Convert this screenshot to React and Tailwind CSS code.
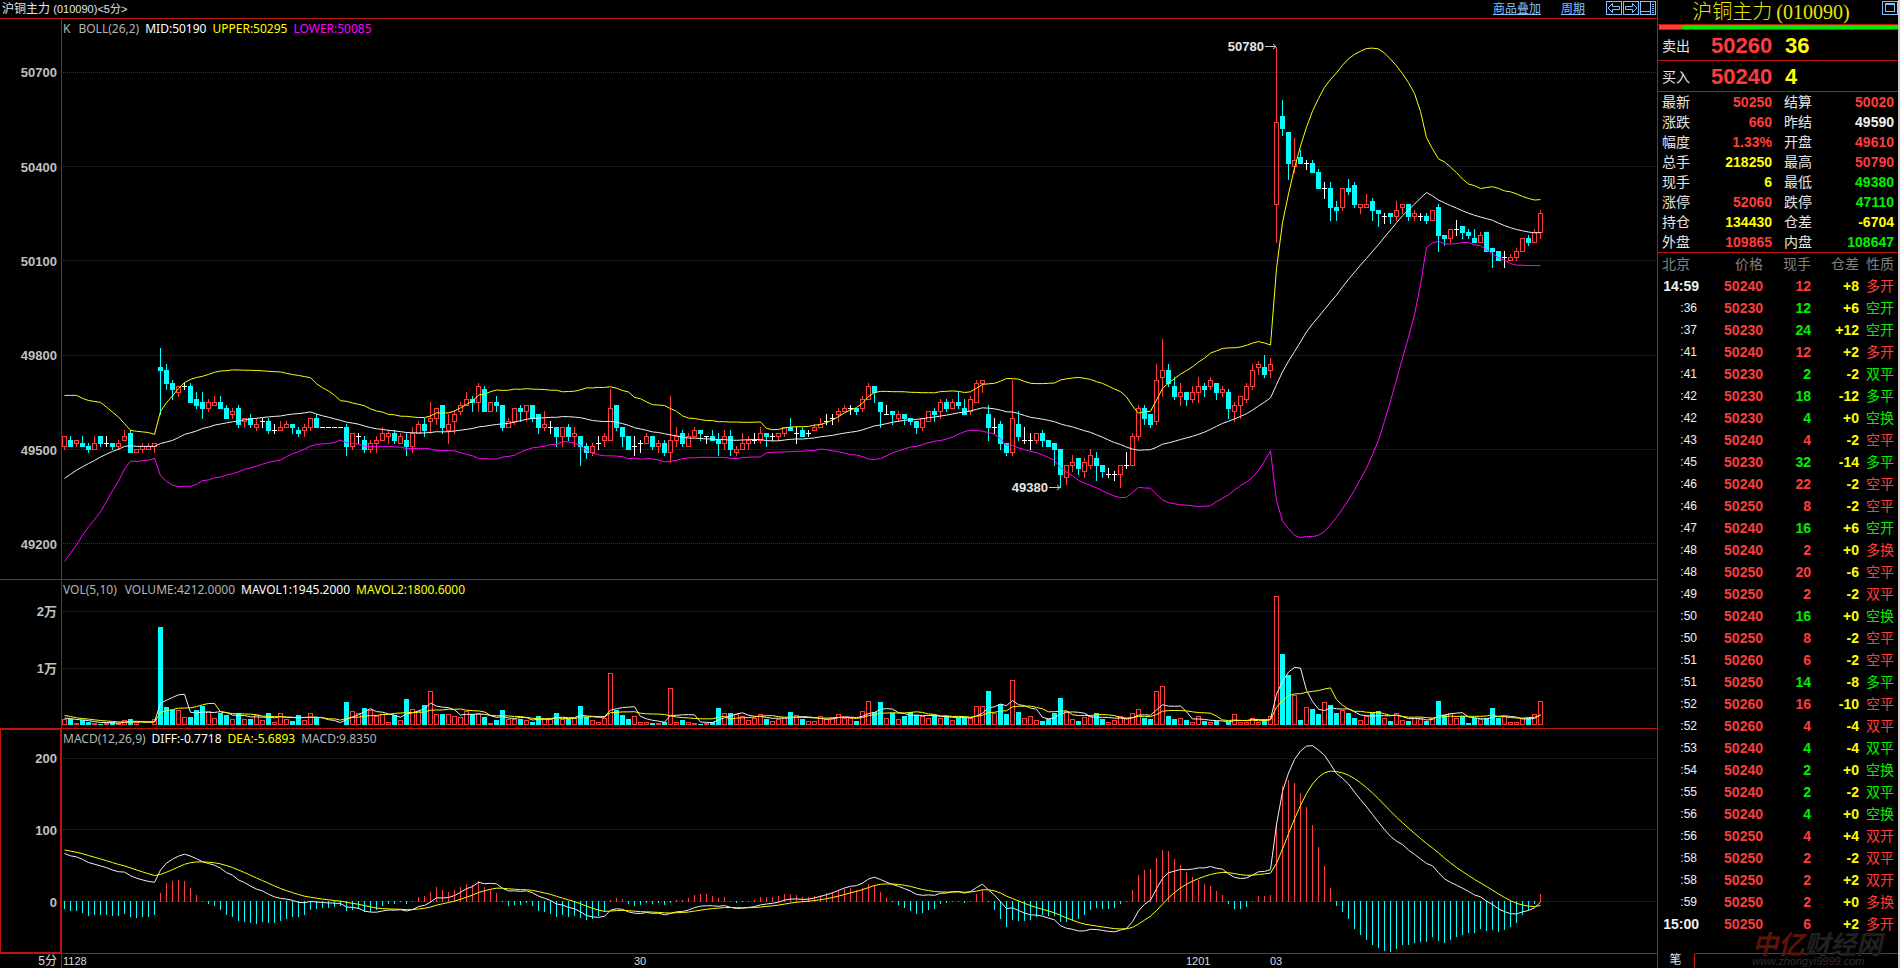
import clsx from "clsx";

// [open, close, high, low], in ticks of 10 counted from 49500
const CANDLES = [
  [1, 4, 4, 0], [3, 1, 4, 1], [2, 3, 3, 1], [2, 1, 4, 1], [1, 0, 2, -1], [0, 2, 4, 0], [4, 2, 4, 1], [2, 2, 4, 1],
  [2, 1, 2, 0], [1, 2, 3, 0], [3, 4, 6, 3], [5, -1, 6, -1], [-1, 0, 0, -1], [0, 1, 2, -1], [0, 1, 2, 0], [1, 2, 2, -1],
  [26, 25, 32, 11], [25, 21, 27, 19], [21, 19, 22, 16], [18, 20, 20, 17], [20, 20, 21, 19], [20, 15, 21, 15], [16, 14, 18, 13], [15, 13, 18, 10],
  [13, 15, 16, 12], [14, 15, 17, 14], [15, 13, 17, 13], [13, 10, 14, 10], [11, 12, 13, 10], [13, 8, 14, 7], [9, 10, 10, 7], [10, 8, 11, 7],
  [7, 8, 10, 6], [9, 9, 10, 7], [9, 6, 10, 5], [6, 6, 8, 5], [6, 7, 9, 6], [7, 8, 9, 7], [8, 7, 8, 5], [6, 5, 7, 4],
  [6, 7, 8, 4], [7, 10, 10, 6], [10, 7, 11, 7], [7, 7, 7, 7], [7, 7, 7, 7], [7, 7, 7, 7], [7, 7, 7, 7], [7, 1, 8, -2],
  [1, 5, 5, 0], [4, 4, 5, 2], [3, 0, 4, -1], [0, 2, 3, -1], [2, 3, 4, -1], [3, 5, 7, 3], [4, 5, 6, 2], [5, 3, 6, 2],
  [2, 4, 5, 2], [3, 1, 5, -2], [1, 5, 7, -1], [5, 8, 9, 5], [8, 6, 10, 4], [9, 10, 15, 5], [10, 13, 13, 8], [14, 7, 14, 5],
  [6, 8, 11, 2], [9, 11, 12, 5], [12, 14, 15, 11], [14, 16, 18, 14], [16, 15, 17, 12], [15, 20, 21, 12], [19, 12, 20, 12], [12, 15, 15, 12],
  [15, 14, 17, 12], [14, 7, 14, 6], [7, 9, 10, 7], [9, 13, 13, 8], [13, 12, 14, 9], [12, 14, 14, 9], [14, 10, 14, 9], [11, 7, 11, 5],
  [7, 8, 12, 6], [7, 7, 9, 5], [7, 4, 7, 1], [4, 7, 7, 1], [7, 4, 8, 3], [4, 5, 7, 1], [4, 1, 4, -5], [1, -1, 2, -3],
  [-1, 1, 2, -2], [2, 2, 4, 0], [3, 4, 5, 1], [3, 13, 19, 3], [14, 7, 14, 6], [7, 4, 7, 1], [4, 0, 4, 0], [1, 1, 4, -2],
  [2, 2, 3, -1], [2, 4, 5, 2], [4, 1, 4, 0], [1, 2, 3, -1], [2, -1, 3, -2], [-1, 3, 17, -4], [3, 4, 7, 1], [5, 2, 6, 1],
  [1, 4, 5, 1], [4, 6, 7, 4], [6, 5, 6, 3], [4, 4, 4, 2], [4, 3, 6, 3], [3, 2, 5, -2], [2, 4, 6, 0], [4, 0, 6, -2],
  [-1, 0, 1, -2], [0, 2, 5, 0], [2, 3, 4, 0], [3, 3, 5, 2], [3, 5, 7, 2], [5, 4, 5, 1], [4, 4, 5, 3], [4, 5, 5, 3],
  [5, 7, 7, 4], [7, 6, 10, 6], [5, 5, 7, 2], [6, 4, 7, 4], [5, 5, 6, 4], [6, 7, 8, 6], [7, 8, 10, 7], [9, 9, 11, 8],
  [10, 10, 11, 8], [11, 12, 13, 9], [12, 13, 14, 12], [13, 13, 14, 11], [13, 12, 13, 11], [13, 16, 17, 12], [16, 20, 21, 16], [20, 18, 20, 15],
  [15, 12, 15, 7], [11, 11, 14, 11], [12, 11, 12, 8], [10, 11, 12, 9], [11, 10, 11, 8], [10, 9, 10, 8], [9, 7, 9, 5], [7, 10, 10, 6],
  [9, 12, 12, 9], [12, 11, 13, 9], [12, 15, 16, 10], [15, 13, 16, 12], [13, 15, 16, 13], [15, 14, 18, 13], [13, 11, 16, 11], [12, 16, 17, 11],
  [15, 21, 22, 15], [21, 22, 22, 18], [11, 7, 14, 3], [7, 7, 10, 5], [8, 2, 9, 0], [2, -1, 2, -2], [-1, 10, 22, -2], [8, 4, 12, 3],
  [3, 3, 7, 2], [3, 3, 5, 0], [3, 5, 5, 2], [5, 3, 6, 1], [3, 1, 3, 1], [2, 0, 2, -5], [0, -8, 0, -12], [-9, -5, -5, -11],
  [-5, -4, -2, -7], [-3, -6, -3, -8], [-7, -4, -3, -9], [-5, -2, 0, -6], [-3, -5, -1, -10], [-5, -7, -5, -9], [-8, -8, -6, -9], [-8, -8, -7, -10],
  [-8, -5, -5, -12], [-5, -5, -1, -6], [-5, 4, 5, -5], [4, 13, 14, 3], [13, 10, 14, 8], [11, 8, 11, 7], [9, 22, 27, 8], [23, 25, 35, 17],
  [25, 21, 27, 20], [20, 17, 23, 16], [17, 18, 21, 14], [18, 16, 18, 14], [16, 18, 20, 15], [18, 20, 23, 15], [20, 19, 21, 17], [20, 22, 23, 19],
  [21, 18, 21, 16], [18, 19, 20, 17], [18, 13, 19, 10], [12, 14, 15, 9], [14, 17, 17, 10], [16, 20, 21, 15], [20, 25, 27, 19], [26, 27, 28, 24],
  [26, 24, 30, 23], [25, 27, 29, 23], [78, 104, 128, 66], [106, 102, 111, 100], [101, 91, 101, 86], [90, 92, 99, 88], [93, 91, 95, 91], [91, 91, 92, 89],
  [91, 88, 92, 88], [88, 83, 89, 83], [83, 83, 85, 80], [83, 77, 85, 73], [77, 76, 79, 73], [77, 83, 83, 76], [83, 82, 86, 81], [84, 78, 85, 77],
  [77, 78, 78, 75], [77, 78, 81, 77], [79, 76, 80, 73], [76, 75, 76, 71], [74, 74, 75, 72], [75, 74, 75, 72], [74, 76, 79, 73], [77, 78, 78, 75],
  [78, 74, 78, 73], [74, 75, 76, 73], [74, 74, 75, 73], [74, 73, 75, 72], [73, 76, 76, 73], [77, 68, 78, 63], [68, 67, 68, 65], [67, 70, 70, 66],
  [70, 70, 73, 68], [71, 69, 71, 67], [69, 68, 70, 67], [67, 66, 70, 66], [66, 68, 69, 66], [69, 63, 69, 63], [64, 63, 64, 58], [63, 60, 63, 60],
  [61, 61, 63, 58], [60, 61, 62, 60], [61, 63, 64, 60], [63, 67, 67, 63], [67, 66, 68, 65], [66, 69, 70, 66], [69, 75, 76, 67],
];

// volume per bar, in hundreds
const VOLUMES = [
  11, 11, 3, 8, 6, 3, 2, 3, 5, 3, 9, 11, 5, 2, 2, 10, 172, 32, 26, 26, 14, 14, 26, 34, 24, 12, 22, 18, 11, 21,
  11, 11, 17, 9, 21, 5, 22, 11, 7, 18, 9, 21, 13, 2, 2, 2, 2, 41, 24, 21, 30, 27, 16, 19, 6, 18, 9, 46, 28, 24,
  35, 60, 19, 19, 20, 16, 14, 25, 19, 22, 14, 3, 9, 26, 10, 10, 11, 8, 5, 16, 11, 11, 21, 10, 10, 12, 33, 14, 8, 6,
  12, 91, 26, 18, 11, 15, 6, 5, 4, 4, 5, 66, 6, 9, 5, 4, 2, 4, 5, 30, 22, 21, 19, 15, 9, 13, 19, 11, 7, 10,
  13, 23, 17, 11, 7, 7, 15, 11, 13, 19, 13, 13, 7, 25, 42, 23, 41, 13, 21, 11, 16, 23, 17, 15, 13, 17, 13, 16, 9, 12,
  14, 12, 33, 33, 60, 21, 37, 19, 79, 23, 13, 15, 9, 7, 10, 22, 48, 24, 11, 7, 14, 15, 21, 11, 5, 9, 15, 13, 21, 29,
  12, 11, 59, 68, 16, 11, 13, 9, 5, 15, 7, 5, 7, 2, 6, 19, 6, 6, 12, 6, 11, 15, 227, 125, 88, 52, 9, 31, 28, 19,
  40, 35, 21, 26, 21, 12, 8, 16, 21, 25, 12, 7, 22, 8, 7, 12, 10, 7, 12, 42, 17, 21, 13, 15, 4, 12, 11, 12, 30, 12,
  16, 6, 6, 13, 13, 19, 42,
];

// bars before the visible window
const PREV_VOLUMES = [30, 25, 20, 18, 15, 14, 12, 11, 12];
const SEED_MID = [-9.2, -7.9, -6.6, -5.5, -4.5, -3.5, -2.4, -1.5, -0.6, 0.1, 1, 1.2, 1, 1, 1, 1, 1.9, 2.4, 2.9, 3.8, 4.8, 5.3, 5.9, 6.7, 7.1];
const SEED_UPPER = [17.2, 17.2, 17.2, 16.3, 15.6, 15.3, 15, 13.5, 11.9, 10.3, 8.2, 6.1, 5.8, 5.6, 5.4, 4.8, 12.1, 14.9, 17.1, 19.4, 21.3, 22.3, 22.9, 23.3, 23.9];

const RED = "#ff3c3c";
const CYAN = "#00ffff";
const WHITE = "#f0f0f0";
const YELLOW = "#ffff00";
const MAGENTA = "#ff00ff";

const closes = CANDLES.map((c) => c[1]);
const barX = (i) => 2 + i * 6;

function boll(period) {
  return closes.map((_, i) => {
    if (i < period - 1) {
      return { mid: SEED_MID[i], upper: SEED_UPPER[i], lower: 2 * SEED_MID[i] - SEED_UPPER[i] };
    }
    const part = closes.slice(i - period + 1, i + 1);
    const mid = part.reduce((a, b) => a + b, 0) / period;
    const std = Math.sqrt(part.reduce((a, b) => a + (b - mid) ** 2, 0) / (period - 1));
    return { mid, upper: mid + 2 * std, lower: mid - 2 * std };
  });
}

function volumeAverage(period) {
  const all = [...PREV_VOLUMES, ...VOLUMES];
  return VOLUMES.map((_, i) => {
    const end = i + PREV_VOLUMES.length + 1;
    return all.slice(end - period, end).reduce((a, b) => a + b, 0) / period;
  });
}

function macd() {
  let fast = -13;
  let slow = -80;
  let dea = 72;
  return closes.map((c, i) => {
    if (i > 0) {
      fast += (c * 10 - fast) * (2 / 13);
      slow += (c * 10 - slow) * (2 / 27);
      dea += (fast - slow - dea) * (2 / 10);
    }
    return { diff: fast - slow, dea, bar: 2 * (fast - slow - dea) };
  });
}

const priceY = (t) => 410.5 - t * 3.143;
const volY = (v) => 125 - v * 0.568;
const macdY = (v) => 152.5 - v * 0.716;

const BOLL = boll(26);
const MACD = macd();

function Curve({ values, toY, color }) {
  const points = values.map((v, i) => `${barX(i) + 0.5},${toY(v).toFixed(1)}`).join(" ");
  return <polyline points={points} fill="none" stroke={color} strokeWidth="1" />;
}

function GridLines({ ys }) {
  return ys.map((y) => (
    <line key={y} x1="1" x2="100%" y1={Math.floor(y) + 0.5} y2={Math.floor(y) + 0.5} stroke="#a80000" strokeDasharray="1 1" shapeRendering="crispEdges" />
  ));
}

function Candle({ i, candle }) {
  const [open, close, high, low] = candle;
  const x = barX(i);
  const top = Math.round(priceY(Math.max(open, close)) - 0.5);
  const bottom = Math.round(priceY(Math.min(open, close)) - 0.5);
  const hi = Math.round(priceY(high) - 0.5);
  const lo = Math.round(priceY(low) - 0.5);
  if (open === close) {
    return <path d={`M${x - 2} ${top + 0.5}h5M${x + 0.5} ${hi}V${lo + 1}`} stroke="#fff" />;
  }
  if (close > open) {
    return <path d={`M${x - 1.5} ${top + 0.5}h4V${bottom + 0.5}h-4zM${x + 0.5} ${hi}V${top}M${x + 0.5} ${bottom + 1}V${lo + 1}`} stroke={RED} fill="none" />;
  }
  return (
    <g fill={CYAN}>
      <rect x={x - 2} y={top} width="5" height={bottom - top + 1} />
      <rect x={x} y={hi} width="1" height={lo - hi + 1} />
    </g>
  );
}

function PriceMark({ x, y, label }) {
  return (
    <g>
      <text x={x - 12} y={y + 5} textAnchor="end" fill="#e6e6e6" className="text-[13px] font-bold">{label}</text>
      <path d={`M${x - 11} ${y + 0.5}h11M${x - 3} ${y - 2}l3 2.5l-3 2.5`} stroke="#c8c8c8" fill="none" />
    </g>
  );
}

function Panel({ title, labels, height, active, children }) {
  return (
    <section className="flex border-b border-[#c01408]">
      <div className={clsx("w-[62px] shrink-0 border-r border-[#c01408] pt-5", active && "shadow-[inset_0_0_0_1px_#c01408]")}>
        <svg className={clsx("block w-full overflow-visible", height)}>
          {labels.map(([text, y]) => (
            <text key={text} x="57" y={y + 5} textAnchor="end" fill="#c0c0c0" className="text-[13px] font-bold">{text}</text>
          ))}
        </svg>
      </div>
      <div className="min-w-0 flex-1">
        <h2 className="flex h-5 items-center gap-1.5 pl-px font-['Noto_Sans',sans-serif] text-xs whitespace-nowrap">{title}</h2>
        <svg className={clsx("block w-full overflow-visible", height)}>{children}</svg>
      </div>
    </section>
  );
}

function PricePanel() {
  const ticks = [["50700", 120], ["50400", 90], ["50100", 60], ["49800", 30], ["49500", 0], ["49200", -30]];
  return (
    <Panel
      height="h-[540px]"
      labels={ticks.map(([t, v]) => [t, priceY(v)])}
      title={
        <>
          <span className="mr-0.5 text-[#b4b4b4]">K</span>
          <span className="text-[#b4b4b4]">BOLL(26,2)</span>
          <span className="text-white">MID:50190</span>
          <span className="text-[#ffff00]">UPPER:50295</span>
          <span className="text-[#ff00ff]">LOWER:50085</span>
        </>
      }
    >
      <GridLines ys={ticks.map(([, v]) => priceY(v))} />
      <g shapeRendering="crispEdges">
        {CANDLES.map((c, i) => <Candle key={i} i={i} candle={c} />)}
      </g>
      <Curve values={BOLL.map((b) => b.mid)} toY={priceY} color={WHITE} />
      <Curve values={BOLL.map((b) => b.upper)} toY={priceY} color={YELLOW} />
      <Curve values={BOLL.map((b) => b.lower)} toY={priceY} color={MAGENTA} />
      <PriceMark x={barX(202)} y={7} label="50780" />
      <PriceMark x={barX(166)} y={448} label="49380" />
    </Panel>
  );
}

function VolumePanel() {
  return (
    <Panel
      height="h-32"
      labels={[["2万", volY(200)], ["1万", volY(100)]]}
      title={
        <>
          <span className="mr-0.5 text-[#b4b4b4]">VOL(5,10)</span>
          <span className="text-[#b4b4b4]">VOLUME:4212.0000</span>
          <span className="text-white">MAVOL1:1945.2000</span>
          <span className="text-[#ffff00]">MAVOL2:1800.6000</span>
        </>
      }
    >
      <GridLines ys={[volY(200), volY(100)]} />
      <g shapeRendering="crispEdges">
        {VOLUMES.map((v, i) => {
          const up = CANDLES[i][1] >= CANDLES[i][0];
          const top = Math.round(volY(v));
          return up ? (
            <rect key={i} x={barX(i) - 1.5} y={top + 0.5} width="4" height={124 - top} fill="none" stroke={RED} />
          ) : (
            <rect key={i} x={barX(i) - 2} y={top} width="5" height={125 - top} fill={CYAN} />
          );
        })}
      </g>
      <Curve values={volumeAverage(5)} toY={volY} color={WHITE} />
      <Curve values={volumeAverage(10)} toY={volY} color={YELLOW} />
    </Panel>
  );
}

function MacdPanel() {
  return (
    <Panel
      active
      height="h-[204px]"
      labels={[["200", macdY(200)], ["100", macdY(100)], ["0", macdY(0)]]}
      title={
        <>
          <span className="text-[#b4b4b4]">MACD(12,26,9)</span>
          <span className="text-white">DIFF:-0.7718</span>
          <span className="text-[#ffff00]">DEA:-5.6893</span>
          <span className="text-[#b4b4b4]">MACD:9.8350</span>
        </>
      }
    >
      <GridLines ys={[macdY(200), macdY(100), macdY(0)]} />
      <g shapeRendering="crispEdges">
        {MACD.map(({ bar }, i) => {
          const y = Math.round(macdY(bar));
          return bar >= 0 ? (
            <rect key={i} x={barX(i)} y={y} width="1" height={Math.max(153 - y, 1)} fill={RED} />
          ) : (
            <rect key={i} x={barX(i)} y="152" width="1" height={Math.max(y - 152, 1)} fill={CYAN} />
          );
        })}
      </g>
      <Curve values={MACD.map((m) => m.diff)} toY={macdY} color={WHITE} />
      <Curve values={MACD.map((m) => m.dea)} toY={macdY} color={YELLOW} />
    </Panel>
  );
}

function TimeAxis() {
  const labels = [["1128", 1], ["30", 572], ["1201", 1124], ["03", 1208]];
  return (
    <div className="flex h-3.5 text-[11px] leading-[14px] text-[#dcdcdc]">
      <div className="w-[62px] shrink-0 border-r border-[#c01408] pr-1 text-right text-xs leading-[14px]">5分</div>
      <svg className="block h-full min-w-0 flex-1">
        {labels.map(([text, x]) => <text key={text} x={x} y="11" fill="#dcdcdc">{text}</text>)}
      </svg>
    </div>
  );
}

function ToolButton({ label, children }) {
  return (
    <button type="button" aria-label={label} className="block">
      <svg width="16" height="14" viewBox="0 0 16 14" fill="none" stroke="#80c0ff" shapeRendering="crispEdges">
        <rect x="0.5" y="0.5" width="15" height="13" />
        {children}
      </svg>
    </button>
  );
}

function TopBar() {
  return (
    <header className="flex h-[19px] items-start border-b border-[#c01408] pl-0.5 text-xs">
      <h1 className="flex-1 leading-[18px] text-[#e6e6e6]">
        沪铜主力 <span className="text-[11px]">(010090)&lt;5分&gt;</span>
      </h1>
      <nav className="flex gap-5 pr-[21px] leading-[18px] text-[#80c0ff] underline">
        <a href="#overlay">商品叠加</a>
        <a href="#period">周期</a>
      </nav>
      <div className="flex gap-px pt-px pr-px">
        <ToolButton label="左移"><path d="M6.5 2.5L2 7l4.5 4.5v-3h7v-3h-7z" shapeRendering="auto" /></ToolButton>
        <ToolButton label="右移"><path d="M9.5 2.5L14 7l-4.5 4.5v-3h-7v-3h7z" shapeRendering="auto" /></ToolButton>
        <ToolButton label="分栏"><path d="M10.5 1v12M1 10.5h9M12 3.5h2M12 5.5h2M12 7.5h2M12 9.5h2M12 11.5h2" /></ToolButton>
      </div>
    </header>
  );
}

const TONES = {
  r: "text-[#ff3c3c]",
  g: "text-[#00f000]",
  y: "text-[#ffff00]",
  w: "text-[#f0f0f0]",
};

const QUOTES = [
  ["最新", "50250", "r", "结算", "50020", "r"],
  ["涨跌", "660", "r", "昨结", "49590", "w"],
  ["幅度", "1.33%", "r", "开盘", "49610", "r"],
  ["总手", "218250", "y", "最高", "50790", "r"],
  ["现手", "6", "y", "最低", "49380", "g"],
  ["涨停", "52060", "r", "跌停", "47110", "g"],
  ["持仓", "134430", "y", "仓差", "-6704", "y"],
  ["外盘", "109865", "r", "内盘", "108647", "g"],
];

const TICKS = [
  ["14:59", 50240, 12, "+8", "多开", "r"],
  [":36", 50230, 12, "+6", "空开", "g"],
  [":37", 50230, 24, "+12", "空开", "g"],
  [":41", 50240, 12, "+2", "多开", "r"],
  [":41", 50230, 2, "-2", "双平", "g"],
  [":42", 50230, 18, "-12", "多平", "g"],
  [":42", 50230, 4, "+0", "空换", "g"],
  [":43", 50240, 4, "-2", "空平", "r"],
  [":45", 50230, 32, "-14", "多平", "g"],
  [":46", 50240, 22, "-2", "空平", "r"],
  [":46", 50250, 8, "-2", "空平", "r"],
  [":47", 50240, 16, "+6", "空开", "g"],
  [":48", 50240, 2, "+0", "多换", "r"],
  [":48", 50250, 20, "-6", "空平", "r"],
  [":49", 50250, 2, "-2", "双平", "r"],
  [":50", 50240, 16, "+0", "空换", "g"],
  [":50", 50250, 8, "-2", "空平", "r"],
  [":51", 50260, 6, "-2", "空平", "r"],
  [":51", 50250, 14, "-8", "多平", "g"],
  [":52", 50260, 16, "-10", "空平", "r"],
  [":52", 50260, 4, "-4", "双平", "r"],
  [":53", 50240, 4, "-4", "双平", "g"],
  [":54", 50240, 2, "+0", "空换", "g"],
  [":55", 50240, 2, "-2", "双平", "g"],
  [":56", 50240, 4, "+0", "空换", "g"],
  [":56", 50250, 4, "+4", "双开", "r"],
  [":58", 50250, 2, "-2", "双平", "r"],
  [":58", 50250, 2, "+2", "双开", "r"],
  [":59", 50250, 2, "+0", "多换", "r"],
  ["15:00", 50250, 6, "+2", "多开", "r"],
];

function BidAsk({ label, price, size }) {
  return (
    <div className="flex h-[31px] items-center border-b border-[#c01408] pt-px pl-1 text-sm text-[#e6e6e6]">
      <span className="w-[49px]">{label}</span>
      <span className="w-[74px] text-[22px] leading-7 font-bold text-[#ff3c3c]">{price}</span>
      <span className="text-[22px] leading-7 font-bold text-[#ffff00]">{size}</span>
    </div>
  );
}

function QuotePanel() {
  return (
    <aside className="relative flex w-[243px] shrink-0 flex-col border-r-2 border-l border-r-[#d4c8c8] border-l-[#c01408] bg-black">
      <div className="relative flex h-6 items-center justify-center pr-3.5">
        <h2 className="flex gap-1 font-['Liberation_Serif','Noto_Sans_CJK_SC',serif] text-xl leading-6 font-light text-[#e8e800]">
          <span>沪铜主力</span>
          <span>(010090)</span>
        </h2>
        <button type="button" aria-label="最大化" className="absolute top-px right-0">
          <svg width="16" height="14" viewBox="0 0 16 14" fill="none" stroke="#80c0ff" shapeRendering="crispEdges" className="block">
            <rect x="0.5" y="0.5" width="15" height="13" />
            <rect x="3.5" y="3.5" width="9" height="7" />
            <path d="M3 2.5h10" />
          </svg>
        </button>
      </div>
      <div className="flex h-1.5 border-y border-[#c01408] pl-px">
        <div className="w-[23px] bg-[#ff3c3c]" />
        <div className="flex-1 bg-[#00e600]" />
      </div>
      <BidAsk label="卖出" price="50260" size="36" />
      <BidAsk label="买入" price="50240" size="4" />
      <table className="w-full table-fixed border-b border-[#c01408] text-sm leading-5">
        <colgroup>
          <col className="w-[40px]" />
          <col className="w-[74px]" />
          <col className="w-[48px]" />
          <col />
        </colgroup>
        <tbody>
          {QUOTES.map(([a, av, at, b, bv, bt]) => (
            <tr key={a} className="h-5 text-left">
              <th className="p-0 pl-1 font-normal text-[#e6e6e6]">{a}</th>
              <td className={clsx("p-0 text-right font-bold", TONES[at])}>{av}</td>
              <th className="p-0 pl-3 font-normal text-[#e6e6e6]">{b}</th>
              <td className={clsx("p-0 pr-1 text-right font-bold", TONES[bt])}>{bv}</td>
            </tr>
          ))}
        </tbody>
      </table>
      <table className="w-full table-fixed text-right text-sm leading-5">
        <colgroup>
          <col className="w-[41px]" />
          <col className="w-[64px]" />
          <col className="w-[48px]" />
          <col className="w-[48px]" />
          <col />
        </colgroup>
        <thead>
          <tr className="h-[22px] text-[#808080]">
            <th className="p-0 pl-1 text-left font-normal">北京</th>
            <th className="p-0 font-normal">价格</th>
            <th className="p-0 font-normal">现手</th>
            <th className="p-0 font-normal">仓差</th>
            <th className="p-0 pr-1 font-normal">性质</th>
          </tr>
        </thead>
        <tbody>
          {TICKS.map(([time, price, vol, chg, kind, tone], i) => (
            <tr key={i} className="h-[22px] font-bold">
              <td className={clsx("p-0 text-[#f0f0f0]", time.startsWith(":") && "pr-0.5 text-xs font-normal")}>{time}</td>
              <td className="p-0 text-[#ff3c3c]">{price}</td>
              <td className={clsx("p-0", TONES[tone])}>{vol}</td>
              <td className="p-0 text-[#ffff00]">{chg}</td>
              <td className={clsx("p-0 pr-1 font-normal", TONES[tone])}>{kind}</td>
            </tr>
          ))}
        </tbody>
      </table>
      <div className="mt-auto flex h-[15px] text-[#e6e6e6]">
        <button type="button" className="w-9 pr-px text-xs leading-[15px]">笔</button>
        <div className="flex-1 rounded-tl-xs border-t border-l border-[#c01408]" />
      </div>
      <div className="absolute right-4 bottom-0.5 font-bold whitespace-nowrap italic">
        <p className="text-[26px] leading-[22px] text-[#20201f]"><span className="text-[#5c1408]">中亿</span>财经网</p>
        <p className="text-[11px] leading-2.5 font-normal text-[#3a2c2a]">www.zhongyi9999.com</p>
      </div>
    </aside>
  );
}

export default function App() {
  return (
    <div className="flex min-h-screen bg-black font-['Liberation_Sans','Noto_Sans_CJK_SC',sans-serif]">
      <main className="flex min-w-0 flex-1 flex-col overflow-hidden">
        <TopBar />
        <PricePanel />
        <VolumePanel />
        <MacdPanel />
        <TimeAxis />
      </main>
      <QuotePanel />
    </div>
  );
}
